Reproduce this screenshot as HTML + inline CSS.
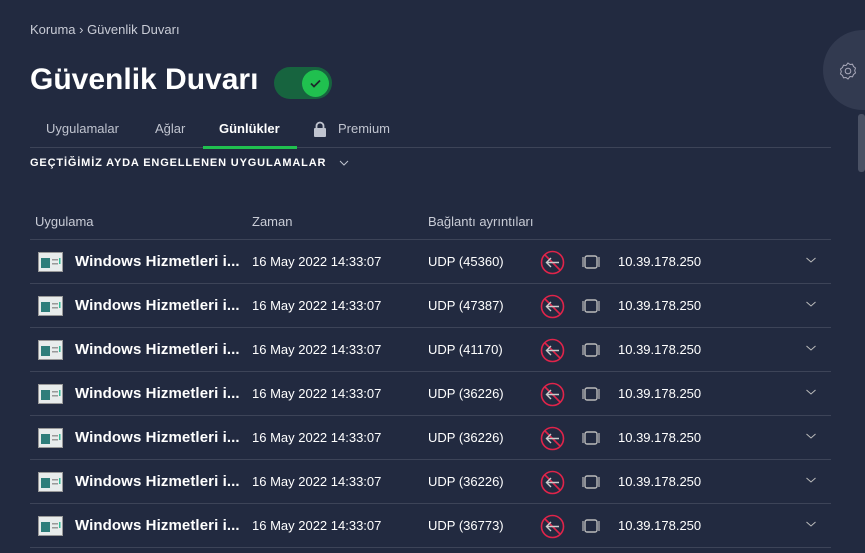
<!DOCTYPE html>
<html><head><meta charset="utf-8"><style>
body{margin:0;width:865px;height:553px;background:#222a40;font-family:"Liberation Sans",sans-serif;color:#fff;position:relative;overflow:hidden}
.a{position:absolute;white-space:nowrap}
.sep{position:absolute;left:30px;width:801px;height:1px;background:#3d4458}
.row{position:absolute;left:0;width:865px;height:44px}
.row .ic{position:absolute;left:38px;top:12px}
.row .n{position:absolute;left:75px;top:13px;font-size:15px;font-weight:bold;letter-spacing:0.1px}
.row .t{position:absolute;left:252px;top:14px;font-size:13px}
.row .u{position:absolute;left:428px;top:14px;font-size:13px}
.row .b{position:absolute;left:540px;top:10px}
.row .d{position:absolute;left:581px;top:15px}
.row .ip{position:absolute;left:618px;top:14px;font-size:13px}
.row .c{position:absolute;left:805px;top:16px}
</style></head><body>
<div class="a" style="left:30px;top:22px;font-size:13px;color:#c9ccd6">Koruma › Güvenlik Duvarı</div>
<div class="a" style="left:30px;top:63px;font-size:30px;font-weight:bold">Güvenlik Duvarı</div>
<div class="a" style="left:274px;top:67px;width:58px;height:32px;border-radius:16px;background:#17643f"></div>
<div class="a" style="left:302px;top:70px;width:27px;height:27px;border-radius:50%;background:#20c04f"></div>
<svg class="a" style="left:308px;top:76px" width="15" height="15" viewBox="0 0 15 15"><path d="M3 7.5l3 3 6-6" stroke="#1c2a2a" stroke-width="1.8" fill="none"/></svg>
<div class="a" style="left:46px;top:121px;font-size:13px;color:#c0c4cf">Uygulamalar</div>
<div class="a" style="left:155px;top:121px;font-size:13px;color:#c0c4cf">Ağlar</div>
<div class="a" style="left:219px;top:121px;font-size:13px;font-weight:bold">Günlükler</div>
<svg class="a" style="left:313px;top:121px" width="14" height="16" viewBox="0 0 14 16"><path d="M3.5 7V5a3.5 3.5 0 017 0v2" stroke="#c0c4cf" stroke-width="1.8" fill="none"/><rect x="1" y="7" width="12" height="9" rx="1" fill="#c0c4cf"/></svg>
<div class="a" style="left:338px;top:121px;font-size:13px;color:#c0c4cf">Premium</div>
<div class="a" style="left:30px;top:147px;width:801px;height:1px;background:#3d4458"></div>
<div class="a" style="left:203px;top:146px;width:94px;height:3px;background:#20c04f"></div>
<div class="a" style="left:30px;top:157px;font-size:11px;font-weight:bold;letter-spacing:0.85px">GEÇTİĞİMİZ AYDA ENGELLENEN UYGULAMALAR</div>
<svg class="a" style="left:339px;top:159px" width="10" height="8"><path d="M1 2l4 4 4-4" stroke="#c0c4cf" fill="none"/></svg>
<div class="a" style="left:35px;top:214px;font-size:13px;color:#c9ccd6">Uygulama</div>
<div class="a" style="left:252px;top:214px;font-size:13px;color:#c9ccd6">Zaman</div>
<div class="a" style="left:428px;top:214px;font-size:13px;color:#c9ccd6">Bağlantı ayrıntıları</div>
<div class="a" style="left:823px;top:30px;width:84px;height:80px;border-radius:40px;background:#323a50"></div>
<svg class="a" style="left:838px;top:61px" width="20" height="20" viewBox="0 0 20 20"><path d="M10 2l2 1.5 2.5-.3 1 2.3 2 1.5-.8 2.5.8 2.5-2 1.5-1 2.3-2.5-.3L10 18l-2-1.5-2.5.3-1-2.3-2-1.5.8-2.5L2.5 8l2-1.5 1-2.3 2.5.3z" stroke="#aab" fill="none"/><circle cx="10" cy="10" r="2.8" stroke="#aab" fill="none"/></svg>
<div class="a" style="left:858px;top:114px;width:7px;height:58px;border-radius:3px;background:#4a5164"></div>
<div class="sep" style="top:239px"></div>
<div id="rows"></div>
<script>
var p=["45360","47387","41170","36226","36226","36226","36773"],h="";
for(var i=0;i<7;i++){var y=240+i*44;
h+='<div class="row" style="top:'+y+'px"><svg class="ic" width="25" height="20" viewBox="0 0 25 20"><rect x="0.5" y="0.5" width="24" height="19" fill="#e8ecec" stroke="#999"/><rect x="3" y="6" width="9" height="10" fill="#2e7d7a"/><rect x="14" y="7" width="6" height="1.5" fill="#999"/><rect x="14" y="11" width="6" height="1.5" fill="#999"/><rect x="21" y="6" width="1.5" height="6" fill="#3b9"/></svg><div class="n">Windows Hizmetleri i...</div><div class="t">16 May 2022 14:33:07</div><div class="u">UDP ('+p[i]+')</div><svg class="b" width="25" height="25" viewBox="0 0 25 25"><circle cx="12.5" cy="12.5" r="11" stroke="#e0244a" stroke-width="1.6" fill="none"/><path d="M5 5l15 15" stroke="#e0244a" stroke-width="1.6"/><path d="M19 12.5H7M11 8l-4.5 4.5L11 17" stroke="#ccc" stroke-width="1.4" fill="none"/></svg><svg class="d" width="20" height="14" viewBox="0 0 20 14"><rect x="4" y="1" width="12" height="12" rx="2" stroke="#bbb" stroke-width="1.4" fill="none"/><path d="M2 2v10M18 2v10" stroke="#bbb" stroke-width="1.2"/></svg><div class="ip">10.39.178.250</div><svg class="c" width="12" height="8"><path d="M1.5 2l4.5 4 4.5-4" stroke="#bbb" fill="none"/></svg></div><div class="sep" style="top:'+(y+43)+'px"></div>';}
document.getElementById("rows").outerHTML=h;
</script>
</body></html>
